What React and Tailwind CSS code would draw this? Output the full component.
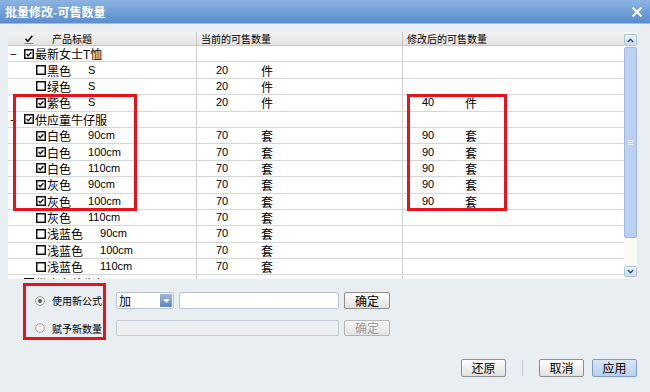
import React from "react";

const font = { fontFamily: '"Noto Sans CJK SC", "Liberation Sans", sans-serif' };
const latin = { fontFamily: '"Liberation Sans", sans-serif' };

const rows = [
  { type: "group", name: "最新女士T恤", checked: true },
  { name: "黑色", size: "S", cur: "20", unit: "件" },
  { name: "绿色", size: "S", cur: "20", unit: "件" },
  { name: "紫色", size: "S", cur: "20", unit: "件", checked: true, next: "40" },
  { type: "group", name: "供应童牛仔服", checked: true },
  { name: "白色", size: "90cm", cur: "70", unit: "套", checked: true, next: "90" },
  { name: "白色", size: "100cm", cur: "70", unit: "套", checked: true, next: "90" },
  { name: "白色", size: "110cm", cur: "70", unit: "套", checked: true, next: "90" },
  { name: "灰色", size: "90cm", cur: "70", unit: "套", checked: true, next: "90" },
  { name: "灰色", size: "100cm", cur: "70", unit: "套", checked: true, next: "90" },
  { name: "灰色", size: "110cm", cur: "70", unit: "套" },
  { name: "浅蓝色", size: "90cm", cur: "70", unit: "套" },
  { name: "浅蓝色", size: "100cm", cur: "70", unit: "套" },
  { name: "浅蓝色", size: "110cm", cur: "70", unit: "套" },
  { type: "group", name: "供应女装牛仔", checked: false },
];

const Check = ({ checked }) => (
  <svg width="10" height="10" viewBox="0 0 10 10" className="shrink-0">
    <rect x="0.75" y="0.75" width="8.5" height="8.5" fill="#fff" stroke="#111" strokeWidth="1.5" />
    {checked && <path d="M2.6 5.1 L4.2 6.7 L7.4 3.2" fill="none" stroke="#111" strokeWidth="1.4" />}
  </svg>
);

const Row = ({ r }) => {
  const isGroup = r.type === "group";
  return (
    <div className="grid h-[16.4px] shrink-0 grid-cols-[189px_206px_221px] border-b border-[#d6d6d6] bg-white text-[12px] leading-[15px] text-black">
      <div className="flex items-center overflow-hidden whitespace-nowrap border-r border-[#d0d0d0]">
        {isGroup ? (
          <>
            <span className="ml-[2px] w-[14px] text-[12px]">−</span>
            <Check checked={r.checked} />
            <span className="ml-[1px]">{r.name}</span>
          </>
        ) : (
          <>
            <span className="ml-[28px]"><Check checked={r.checked} /></span>
            <span className="ml-[1px]">{r.name}</span>
            <span className="ml-[17px] text-[11px]" style={latin}>{r.size}</span>
          </>
        )}
      </div>
      <div className="flex items-center border-r border-[#d0d0d0]">
        {!isGroup && (
          <>
            <span className="ml-[19px] w-[45px] text-[11px]" style={latin}>{r.cur}</span>
            <span>{r.unit}</span>
          </>
        )}
      </div>
      <div className="flex items-center">
        {r.next && (
          <>
            <span className="ml-[19px] w-[43px] text-[11px]" style={latin}>{r.next}</span>
            <span>{r.unit}</span>
          </>
        )}
      </div>
    </div>
  );
};

const Btn = ({ children, primary, disabled, className = "" }) => (
  <button
    className={`flex items-center justify-center rounded-[2px] border text-[12px] leading-none ${
      primary
        ? "border-[#7d9cc4] bg-gradient-to-b from-[#d9e7f8] to-[#b9d0ee] text-black"
        : disabled
        ? "border-[#b5b5b5] bg-gradient-to-b from-[#f7f7f7] to-[#e3e3e3] text-[#9a9a9a]"
        : "border-[#8f8f8f] bg-gradient-to-b from-[#ffffff] to-[#e1e1e1] text-black"
    } ${className}`}
  >
    {children}
  </button>
);

const Radio = ({ on }) => (
  <svg width="10" height="10" viewBox="0 0 10 10" className="shrink-0">
    <circle cx="5" cy="5" r="4.4" fill="#f4f4f4" stroke="#9a9a9a" strokeWidth="1" />
    {on && <circle cx="5" cy="5" r="2" fill="#555" />}
  </svg>
);

export default function App() {
  return (
    <div className="relative flex h-[392px] w-[650px] flex-col overflow-hidden bg-[#e9eef3]" style={font}>
      <div className="flex h-[24px] shrink-0 items-center justify-between border-b border-[#9dbde6] bg-gradient-to-b from-[#8cb4e3] to-[#5b8dcd] px-[5px]">
        <span className="text-[12px] font-bold text-white">批量修改-可售数量</span>
        <svg width="12" height="12" viewBox="0 0 12 12" className="mr-[2px]">
          <path d="M1.5 1.5 L10.5 10.5 M10.5 1.5 L1.5 10.5" stroke="#fff" strokeWidth="2" />
        </svg>
      </div>

      <div className="ml-[8px] mt-[8px] flex h-[247px] w-[629px] shrink-0">
        <div className="flex w-[616px] flex-col overflow-hidden bg-white">
          <div className="grid h-[14px] shrink-0 grid-cols-[189px_206px_221px] border-b border-[#c8c8c8] bg-gradient-to-b from-[#f4f4f4] to-[#e2e2e2] text-[10px] leading-[13px] text-black">
            <div className="flex items-center border-r border-[#c8c8c8]">
              <svg width="10" height="10" viewBox="0 0 10 10" className="ml-[16px]">
                <path d="M0.5 9.5 L9.5 9.5" stroke="#888" strokeWidth="1" />
                <path d="M1.5 4.8 L3.8 7.3 L8.3 1.8" fill="none" stroke="#111" strokeWidth="1.5" />
              </svg>
              <span className="ml-[18px]">产品标题</span>
            </div>
            <div className="flex items-center border-r border-[#c8c8c8] pl-[4px]">当前的可售数量</div>
            <div className="flex items-center pl-[4px]">修改后的可售数量</div>
          </div>
          {rows.map((r, i) => (
            <Row key={i} r={r} />
          ))}
        </div>
        <div className="flex w-[13px] flex-col bg-[#f3f6fa]">
          <div className="mt-[2px] flex h-[12px] items-center justify-center rounded-[2px] border border-[#a9c1e3] bg-gradient-to-b from-[#eef4fc] to-[#cddcf2]">
            <svg width="7" height="5" viewBox="0 0 7 5"><path d="M0.8 4 L3.5 1.2 L6.2 4" fill="none" stroke="#2b4f84" strokeWidth="1.4" /></svg>
          </div>
          <div className="mt-[1px] flex h-[191px] items-center justify-center rounded-[2px] border border-[#9fbbe4] bg-[#bcd1f2]">
            <svg width="5" height="5" viewBox="0 0 5 5"><path d="M0 0.5 H5 M0 2.5 H5 M0 4.5 H5" stroke="#f0f5fc" strokeWidth="0.8" /></svg>
          </div>
          <div className="flex-1 bg-[#fbfbf5]" />
          <div className="mb-[2px] flex h-[11px] items-center justify-center rounded-[2px] border border-[#a9c1e3] bg-gradient-to-b from-[#eef4fc] to-[#cddcf2]">
            <svg width="7" height="5" viewBox="0 0 7 5"><path d="M0.8 1 L3.5 3.8 L6.2 1" fill="none" stroke="#2b4f84" strokeWidth="1.4" /></svg>
          </div>
        </div>
      </div>

      <div className="ml-[23px] mt-[4px] flex">
        <div className="flex h-[57px] w-[83px] flex-col border-[3px] border-[#e8121a] pt-[6px] text-[10px] text-black">
          <div className="flex h-[17px] items-center whitespace-nowrap pl-[9px]">
            <Radio on />
            <span className="ml-[7px]">使用新公式</span>
          </div>
          <div className="mt-[11px] flex h-[16px] items-center whitespace-nowrap pl-[9px]">
            <Radio />
            <span className="ml-[7px]">赋予新数量</span>
          </div>
        </div>
        <div className="ml-[10px] flex flex-col pt-[9px]">
          <div className="flex h-[17px] items-center">
            <div className="flex h-[17px] w-[58px] items-center justify-between rounded-[2px] border border-[#b8c4d2] bg-white pl-[2px] pr-[1px] text-[12px] leading-none">
              <span>加</span>
              <span className="flex h-[13px] w-[12px] items-center justify-center bg-gradient-to-b from-[#9cb8dc] to-[#5d86bd]">
                <svg width="7" height="4" viewBox="0 0 7 4"><path d="M0 0 H7 L3.5 4 Z" fill="#fff" /></svg>
              </span>
            </div>
            <div className="ml-[5px] h-[17px] w-[160px] rounded-[2px] border border-[#b8c4d2] bg-white" />
            <Btn className="ml-[5px] h-[17px] w-[46px]">确定</Btn>
          </div>
          <div className="mt-[11px] flex h-[16px] items-center">
            <div className="h-[16px] w-[223px] rounded-[2px] border border-[#c6cdd6] bg-[#eef0f2]" />
            <Btn disabled className="ml-[5px] h-[16px] w-[46px]">确定</Btn>
          </div>
        </div>
      </div>

      <div className="mt-[19px] flex items-center justify-end pr-[13px]">
        <Btn className="h-[18px] w-[45px]">还原</Btn>
        <div className="mx-[16px] h-[16px] w-px bg-[#c5ccd4]" />
        <Btn className="h-[18px] w-[45px]">取消</Btn>
        <Btn primary className="ml-[8px] h-[18px] w-[45px]">应用</Btn>
      </div>

      <div className="pointer-events-none absolute left-[13px] top-[94px] h-[117px] w-[124px] border-[3px] border-[#e8121a]" />
      <div className="pointer-events-none absolute left-[407px] top-[94px] h-[117px] w-[100px] border-[3px] border-[#e8121a]" />
    </div>
  );
}
